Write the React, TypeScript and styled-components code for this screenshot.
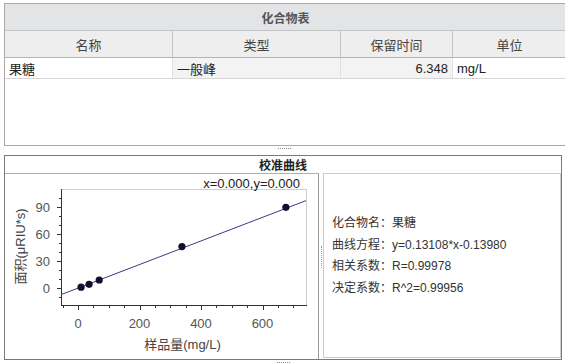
import styled, { createGlobalStyle } from 'styled-components';

const GlobalStyle = createGlobalStyle`
  html, body {
    margin: 0;
    background: #ffffff;
    overflow: hidden;
  }
  body {
    font-family: 'Noto Sans', 'Noto Sans CJK SC', sans-serif;
    color: #333;
  }
`;

const CJK = `'Liberation Sans', 'Noto Sans CJK SC', sans-serif`;

const Page = styled.div`
  display: flex;
  flex-direction: column;
  width: 565px;
  height: 363px;
  padding: 3px 0 0 4px;
  box-sizing: border-box;
  font-family: ${CJK};
  & > * {
    flex-shrink: 0;
  }
`;

/* ---------- top: compound table ---------- */

const TablePanel = styled.div`
  width: 563px;
  height: 143px;
  box-sizing: border-box;
  border: 1px solid #a9a9a9;
  display: flex;
  flex-direction: column;
  background: #fff;
`;

const TableTitle = styled.div`
  height: 26px;
  background: #e3e4e6;
  border-bottom: 1px solid #c4c4c4;
  display: flex;
  align-items: center;
  justify-content: center;
  font-size: 12px;
  font-weight: bold;
  color: #555;
`;

const Row = styled.div<{ $head?: boolean }>`
  display: grid;
  grid-template-columns: 168px 168px 112px 1fr;
  height: ${(p) => (p.$head ? 26 : 20)}px;
  background: ${(p) => (p.$head ? '#eeeeee' : '#ffffff')};
  border-bottom: 1px solid ${(p) => (p.$head ? '#b4b4b4' : '#d6d6d6')};
`;

const HeadCell = styled.div`
  display: flex;
  align-items: center;
  justify-content: center;
  border-right: 1px solid #c6c6c6;
  font-size: 13px;
  color: #444;
  &:last-child {
    border-right: none;
  }
`;

const Cell = styled.div<{ $align?: 'left' | 'right'; $shade?: boolean }>`
  display: flex;
  align-items: center;
  justify-content: ${(p) => (p.$align === 'right' ? 'flex-end' : 'flex-start')};
  padding: 0 4px 0 4px;
  background: ${(p) => (p.$shade ? '#f3f3f3' : '#ffffff')};
  border-right: 1px solid #e2e2e2;
  font-size: 13px;
  color: #222;
  &:last-child {
    border-right: none;
  }
`;

const HSplitter = styled.div<{ $w: number; $h: number }>`
  width: ${(p) => p.$w}px;
  height: ${(p) => p.$h}px;
  display: flex;
  align-items: flex-start;
  justify-content: center;
  &::after {
    content: '';
    width: 13px;
    margin-top: 2px;
    border-top: 1px dotted #8a8a8a;
  }
`;

/* ---------- bottom: calibration curve ---------- */

const CurvePanel = styled.div`
  width: 558px;
  height: 205px;
  box-sizing: border-box;
  border: 1px solid #7a7a7a;
  display: flex;
  flex-direction: column;
`;

const CurveTitle = styled.div`
  height: 17px;
  display: flex;
  align-items: flex-end;
  justify-content: center;
  font-size: 12px;
  font-weight: bold;
  color: #222;
  line-height: 14px;
`;

const CurveBody = styled.div`
  flex: 1;
  display: flex;
`;

const ChartBox = styled.div`
  width: 314px;
  box-sizing: border-box;
  border-top: 1px solid #b0b0b0;
  border-right: 1px solid #9a9a9a;
  background: #fff;
  display: flex;
`;

const VSplitter = styled.div`
  width: 4px;
  display: flex;
  align-items: center;
  justify-content: center;
  &::after {
    content: '';
    height: 22px;
    border-left: 1px dotted #9a9a9a;
    margin-top: -18px;
  }
`;

const InfoBox = styled.div`
  width: 238px;
  height: 185px;
  box-sizing: border-box;
  border: 1px solid #cccccc;
  padding: 37px 0 0 8px;
  display: flex;
  flex-direction: column;
`;

const InfoLine = styled.div`
  height: 21.5px;
  display: flex;
  align-items: center;
  font-size: 12px;
  color: #333;
  white-space: nowrap;
`;

/* ---------- chart drawing ---------- */

const X0 = 78;
const XS = 0.3075;
const Y0 = 288;
const YS = 0.9;
const L = 61;
const T = 189;
const R = 306;
const B = 305;

const px = (v: number) => X0 + v * XS;
const py = (v: number) => Y0 - v * YS;

const points: [number, number][] = [
  [10, 0.9],
  [36, 4.1],
  [69, 8.9],
  [338, 46],
  [676, 89.6],
];

const ChartSvg = styled.svg`
  display: block;
  font-family: ${CJK};
`;

const CalibrationChart = () => {
  const fit = (v: number) => 0.13108 * v - 0.1398;
  const xMin = (L - X0) / XS;
  const xMax = (R - X0) / XS;

  const yTicks: number[] = [];
  for (let v = -10; v <= 100; v += 10) yTicks.push(v);
  const xTicks: number[] = [];
  for (let v = -50; v <= 700; v += 50) xTicks.push(v);

  return (
    <ChartSvg width={313} height={185} viewBox="5 174 313 185">
      <line x1={L} y1={T + 0.5} x2={R} y2={T + 0.5} stroke="#cfcfcf" />
      <line x1={R + 0.5} y1={T} x2={R + 0.5} y2={B} stroke="#cfcfcf" />
      <line x1={L + 0.5} y1={T} x2={L + 0.5} y2={B + 0.5} stroke="#333" />
      <line x1={L} y1={B + 0.5} x2={R + 1} y2={B + 0.5} stroke="#333" />

      {yTicks.map((v) => {
        const major = v % 30 === 0;
        const y = Math.round(py(v)) + 0.5;
        return (
          <line key={`y${v}`} x1={L - (major ? 4 : 2)} y1={y} x2={L} y2={y} stroke="#333" />
        );
      })}
      {xTicks.map((v) => {
        const major = v % 200 === 0;
        const x = Math.round(px(v)) + 0.5;
        return (
          <line key={`x${v}`} x1={x} y1={B} x2={x} y2={B + (major ? 5 : 3)} stroke="#333" />
        );
      })}

      {[0, 30, 60, 90].map((v) => (
        <text key={`yl${v}`} x={50} y={py(v) + 4.5} textAnchor="end" fontSize={13} fill="#555">
          {v}
        </text>
      ))}
      {[0, 200, 400, 600].map((v) => (
        <text key={`xl${v}`} x={px(v)} y={327.5} textAnchor="middle" fontSize={13} fill="#555">
          {v}
        </text>
      ))}

      <line x1={L} y1={py(fit(xMin))} x2={R} y2={py(fit(xMax))} stroke="#3a3a86" strokeWidth={1} />
      {points.map(([x, y]) => (
        <circle key={x} cx={px(x)} cy={py(y)} r={3.6} fill="#10102e" />
      ))}

      <text x={300} y={187.5} textAnchor="end" fontSize={13} fill="#222">
        x=0.000,y=0.000
      </text>
      <text x={182.5} y={348.5} textAnchor="middle" fontSize={13} fill="#444">
        样品量(mg/L)
      </text>
      <text
        x={0}
        y={0}
        transform="translate(24.5 246.5) rotate(-90)"
        textAnchor="middle"
        fontSize={13}
        fill="#444"
      >
        面积(μRIU*s)
      </text>
    </ChartSvg>
  );
};

const info = ['化合物名：果糖', '曲线方程：y=0.13108*x-0.13980', '相关系数：R=0.99978', '决定系数：R^2=0.99956'];

export default function App() {
  return (
    <>
      <GlobalStyle />
      <Page>
        <TablePanel>
          <TableTitle>化合物表</TableTitle>
          <Row $head>
            <HeadCell>名称</HeadCell>
            <HeadCell>类型</HeadCell>
            <HeadCell>保留时间</HeadCell>
            <HeadCell>单位</HeadCell>
          </Row>
          <Row>
            <Cell>果糖</Cell>
            <Cell $shade>一般峰</Cell>
            <Cell $shade $align="right">6.348</Cell>
            <Cell>mg/L</Cell>
          </Row>
        </TablePanel>
        <HSplitter $w={561} $h={9} />
        <CurvePanel>
          <CurveTitle>校准曲线</CurveTitle>
          <CurveBody>
            <ChartBox>
              <CalibrationChart />
            </ChartBox>
            <VSplitter />
            <InfoBox>
              {info.map((t) => (
                <InfoLine key={t}>{t}</InfoLine>
              ))}
            </InfoBox>
          </CurveBody>
        </CurvePanel>
        <HSplitter $w={558} $h={4} />
      </Page>
    </>
  );
}
